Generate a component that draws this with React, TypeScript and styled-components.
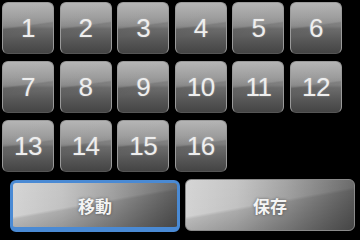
import * as React from "react";
import styled, { createGlobalStyle } from "styled-components";

const GlobalStyle = createGlobalStyle`
  html, body {
    margin: 0;
    padding: 0;
    background: #000;
  }
  body {
    font-family: "Liberation Sans", Arial, "Noto Sans CJK JP", sans-serif;
  }
`;

const Screen = styled.div`
  width: 360px;
  height: 236px;
  background: #000;
  overflow: hidden;
`;

const Grid = styled.div`
  display: grid;
  grid-template-columns: repeat(6, 52px);
  grid-auto-rows: 52px;
  column-gap: 5.6px;
  row-gap: 7px;
  padding: 2px 0 0 2px;
`;

const Tile = styled.div`
  border-radius: 6px;
  border: 1px solid #9a9a9a;
  border-bottom-color: #555;
  box-sizing: border-box;
  background:
    linear-gradient(172deg, rgba(255, 255, 255, 0.1) 0%, rgba(255, 255, 255, 0.06) 44%, rgba(0, 0, 0, 0.08) 47%, rgba(0, 0, 0, 0) 60%),
    linear-gradient(to bottom, #adadad 0%, #969696 30%, #848484 46%, #6c6c6c 52%, #575757 75%, #444 100%);
  display: flex;
  align-items: center;
  justify-content: center;
  color: #eeeeee;
  font-size: 26px;
  letter-spacing: -0.5px;
  text-shadow: 0 0 2px rgba(255, 255, 255, 0.3);
`;

const ButtonRow = styled.div`
  display: flex;
  align-items: flex-start;
  gap: 5px;
  padding: 7px 0 0 10px;
`;

const Button = styled.div<{ $focused?: boolean }>`
  width: 170px;
  height: 52px;
  box-sizing: border-box;
  border-radius: 6px;
  margin-top: ${(p) => (p.$focused ? "1px" : "0")};
  border: ${(p) => (p.$focused ? "3px solid #4a8ad4" : "1px solid #8a8a8a")};
  border-bottom-width: ${(p) => (p.$focused ? "5px" : "1px")};
  background:
    linear-gradient(170deg, rgba(255, 255, 255, 0.08) 0%, rgba(255, 255, 255, 0) 46%, rgba(0, 0, 0, 0.12) 50%, rgba(0, 0, 0, 0.35) 100%),
    linear-gradient(to right, #d2d2d2 0%, #c2c2c2 30%, #a0a0a0 60%, #6a6a6a 100%);
  display: flex;
  align-items: center;
  justify-content: center;
  color: #f4f4f4;
  font-family: "Noto Sans CJK JP", "Noto Sans CJK SC", sans-serif;
  font-weight: 700;
  font-size: 17px;
  text-shadow: 0 0 3px rgba(0, 0, 0, 0.45);
`;

const labels = Array.from({ length: 16 }, (_, i) => String(i + 1));

const App = () => (
  <Screen>
    <GlobalStyle />
    <Grid>
      {labels.map((l) => (
        <Tile key={l}>{l}</Tile>
      ))}
    </Grid>
    <ButtonRow>
      <Button $focused>移動</Button>
      <Button>保存</Button>
    </ButtonRow>
  </Screen>
);

export default App;
